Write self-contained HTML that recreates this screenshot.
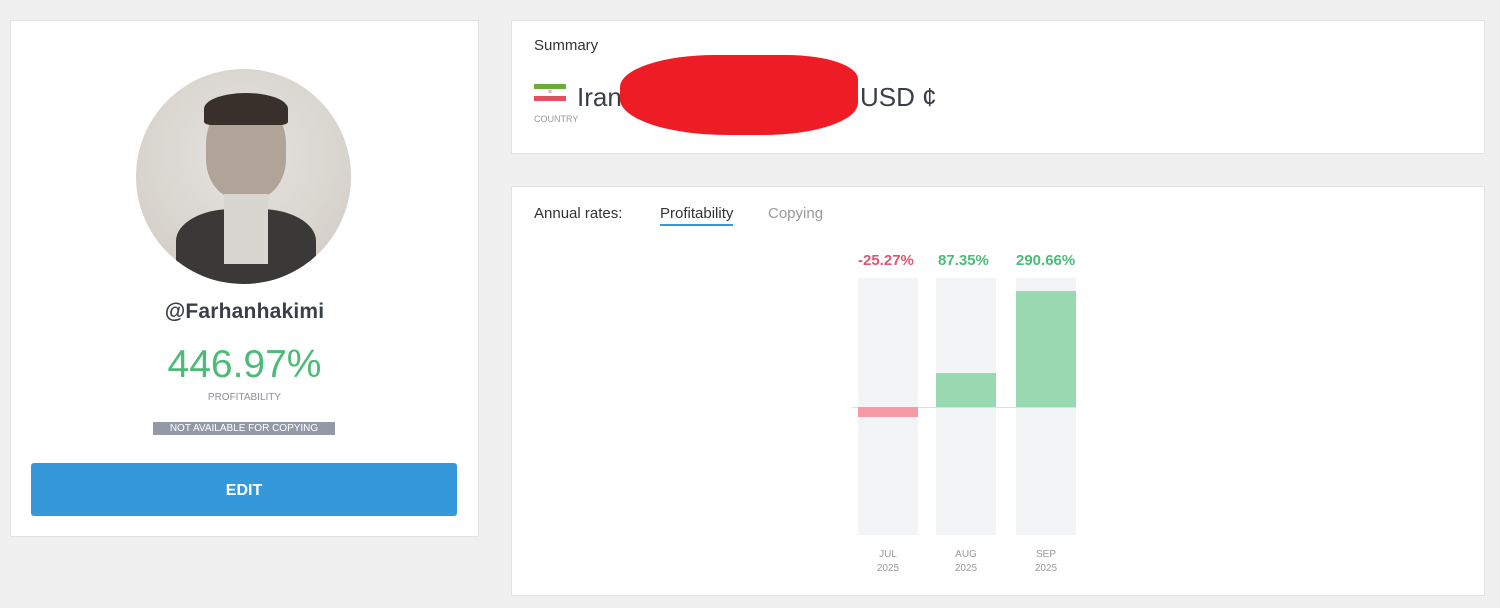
<!DOCTYPE html>
<html><head><style>
body{margin:0;width:1500px;height:608px;background:#f0f0f0;font-family:"Liberation Sans",sans-serif;position:relative;overflow:hidden}
.card{position:absolute;background:#fff;border:1px solid #e3e3e3;box-sizing:border-box}
.a{position:absolute}
</style></head><body>
<div class="card" style="left:10px;top:20px;width:469px;height:517px"></div>
<div class="a" style="left:136px;top:69px;width:215px;height:215px;border-radius:50%;overflow:hidden;background:radial-gradient(circle at 50% 40%,#e6e4e0,#d6d2cb 70%,#bdb8b0)">
 <div class="a" style="left:70px;top:30px;width:80px;height:100px;border-radius:45% 45% 40% 40%;background:#b0a498"></div>
 <div class="a" style="left:68px;top:24px;width:84px;height:32px;border-radius:50% 50% 10% 10%;background:#3a302b"></div>
 <div class="a" style="left:40px;top:140px;width:140px;height:80px;border-radius:40% 40% 0 0;background:#3b3937"></div>
 <div class="a" style="left:88px;top:125px;width:44px;height:70px;background:#d9d6d2"></div>
</div>
<div class="a" style="left:10px;top:300px;width:469px;text-align:center;font-size:21px;color:#3a3f47;font-weight:bold;letter-spacing:0.2px">@Farhanhakimi</div>
<div class="a" style="left:10px;top:343px;width:469px;text-align:center;font-size:39px;color:#4cbb78">446.97%</div>
<div class="a" style="left:10px;top:392px;width:469px;text-align:center;font-size:10px;color:#8a8f96">PROFITABILITY</div>
<div class="a" style="left:153px;top:422px;width:182px;height:13px;background:#939aa6;color:#fff;font-size:10px;text-align:center;line-height:13px">NOT AVAILABLE FOR COPYING</div>
<div class="a" style="left:31px;top:463px;width:426px;height:53px;background:#3498db;border-radius:3px;color:#fff;font-size:16px;font-weight:bold;text-align:center;line-height:55px">EDIT</div>

<div class="card" style="left:511px;top:20px;width:974px;height:134px"></div>
<div class="a" style="left:534px;top:37px;font-size:15px;color:#333">Summary</div>
<div class="a" style="left:534px;top:84px;width:32px;height:22px">
 <div style="height:5px;background:#6aab3a"></div><div style="height:7px;background:#fff;text-align:center;font-size:5px;color:#d33">♔</div><div style="height:5px;background:#e94d5c"></div></div>
<div class="a" style="left:577px;top:82px;font-size:26px;color:#3a3f47">Iran</div>
<div class="a" style="left:860px;top:82px;font-size:26px;color:#3a3f47">USD ¢</div>
<div class="a" style="left:534px;top:114px;font-size:9px;color:#999">COUNTRY</div>
<div class="a" style="left:620px;top:55px;width:238px;height:80px;background:#ee1c25;border-radius:40% 30% 40% 45%"></div>

<div class="card" style="left:511px;top:186px;width:974px;height:410px"></div>
<div class="a" style="left:534px;top:205px;font-size:15px;color:#333">Annual rates:</div>
<div class="a" style="left:660px;top:205px;font-size:15px;color:#333;border-bottom:2px solid #3498db;padding-bottom:2px">Profitability</div>
<div class="a" style="left:768px;top:205px;font-size:15px;color:#999">Copying</div>

<div class="a" style="left:858px;top:278px;width:60px;height:257px;background:#f3f4f6"></div>
<div class="a" style="left:936px;top:278px;width:60px;height:257px;background:#f3f4f6"></div>
<div class="a" style="left:1016px;top:278px;width:60px;height:257px;background:#f3f4f6"></div>
<div class="a" style="left:852px;top:407px;width:224px;height:1px;background:#dde"></div>
<div class="a" style="left:858px;top:407px;width:60px;height:10px;background:#f59aa6"></div>
<div class="a" style="left:936px;top:373px;width:60px;height:34px;background:#99d9b2"></div>
<div class="a" style="left:1016px;top:291px;width:60px;height:116px;background:#99d9b2"></div>
<div class="a" style="left:858px;top:252px;font-size:15px;font-weight:bold;color:#e0556e">-25.27%</div>
<div class="a" style="left:938px;top:252px;font-size:15px;font-weight:bold;color:#4cbb78">87.35%</div>
<div class="a" style="left:1016px;top:252px;width:62px;overflow:hidden;white-space:nowrap;font-size:15px;font-weight:bold;color:#4cbb78">290.66%</div>
<div class="a" style="left:858px;top:548px;width:60px;text-align:center;font-size:10px;color:#999;line-height:14px">JUL<br>2025</div>
<div class="a" style="left:936px;top:548px;width:60px;text-align:center;font-size:10px;color:#999;line-height:14px">AUG<br>2025</div>
<div class="a" style="left:1016px;top:548px;width:60px;text-align:center;font-size:10px;color:#999;line-height:14px">SEP<br>2025</div>
</body></html>
